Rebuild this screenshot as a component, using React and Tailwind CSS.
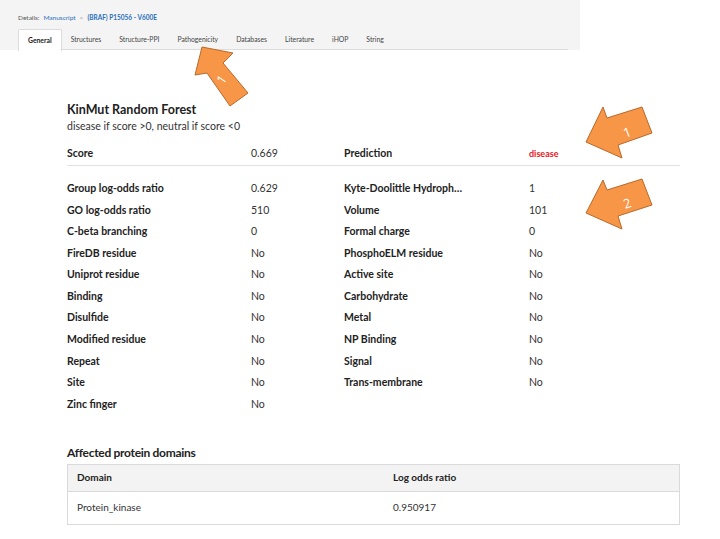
import React from "react";

const rows = [
  ["Group log-odds ratio", "0.629", "Kyte-Doolittle Hydroph…", "1"],
  ["GO log-odds ratio", "510", "Volume", "101"],
  ["C-beta branching", "0", "Formal charge", "0"],
  ["FireDB residue", "No", "PhosphoELM residue", "No"],
  ["Uniprot residue", "No", "Active site", "No"],
  ["Binding", "No", "Carbohydrate", "No"],
  ["Disulfide", "No", "Metal", "No"],
  ["Modified residue", "No", "NP Binding", "No"],
  ["Repeat", "No", "Signal", "No"],
  ["Site", "No", "Trans-membrane", "No"],
  ["Zinc finger", "No", "", ""],
];

const tabs = ["General", "Structures", "Structure-PPI", "Pathogenicity", "Databases", "Literature", "iHOP", "String"];

export default function App() {
  return (
    <div className="relative w-[720px] h-[539px] bg-white overflow-hidden text-[#333]" style={{ fontFamily: "Lato, 'Open Sans', sans-serif" }}>
      <div className="w-[580px] h-[50px] bg-[#f4f4f4] pt-[13px] pl-[18px]">
        <div className="flex items-center gap-[4px] text-[6.5px] leading-[10px]">
          <span className="text-[#555]">Details:</span>
          <span className="text-[#2a6ebb]">Manuscript</span>
          <span className="text-[#999]">&gt;</span>
          <span className="text-[#2a6ebb] font-bold">(BRAF) P15056 - V600E</span>
        </div>
        <div className="mt-[5px] w-[550px] h-[22px] flex border-b border-[#dcdcdc]">
          {tabs.map((t, i) => (
            <div
              key={t}
              className={
                i === 0
                  ? "px-[9px] h-[22px] flex items-center bg-white border border-b-0 border-[#dcdcdc] rounded-t-[2px] text-[6.8px] font-bold text-[#222] relative top-[1px]"
                  : "px-[9px] h-[22px] flex items-center text-[6.8px] text-[#444]"
              }
            >
              {t}
            </div>
          ))}
        </div>
      </div>

      <div className="ml-[67px] w-[613px] mt-[52px]">
        <div className="text-[12.5px] leading-[16px] font-bold text-[#222]">KinMut Random Forest</div>
        <div className="mt-[2px] text-[10.5px] leading-[13px] text-[#333]">disease if score &gt;0, neutral if score &lt;0</div>

        <div className="mt-[10px] grid grid-cols-[184px_93px_185px_1fr] h-[23px] items-center border-b border-[#e2e2e2] text-[10.5px]">
          <span className="font-bold text-[#222]">Score</span>
          <span>0.669</span>
          <span className="font-bold text-[#222]">Prediction</span>
          <span className="text-[#e8141c] font-bold text-[9px]">disease</span>
        </div>

        <div className="mt-[12px]">
          {rows.map((r) => (
            <div key={r[0]} className="grid grid-cols-[184px_93px_185px_1fr] h-[21.6px] items-center text-[10.5px]">
              <span className="font-bold text-[#222] whitespace-nowrap">{r[0]}</span>
              <span>{r[1]}</span>
              <span className="font-bold text-[#222] whitespace-nowrap">{r[2]}</span>
              <span>{r[3]}</span>
            </div>
          ))}
        </div>

        <div className="mt-[29px] text-[12px] leading-[15px] font-bold text-[#222] tracking-[-0.3px]">Affected protein domains</div>
        <div className="mt-[4px] border border-[#dadada]">
          <div className="grid grid-cols-[325px_1fr] h-[27px] items-center bg-[#f3f3f3] border-b border-[#dadada] text-[10px] font-bold text-[#222]">
            <span className="pl-[9px]">Domain</span>
            <span>Log odds ratio</span>
          </div>
          <div className="grid grid-cols-[325px_1fr] h-[32px] items-center text-[10px]">
            <span className="pl-[9px]">Protein_kinase</span>
            <span>0.950917</span>
          </div>
        </div>
      </div>

      <svg className="absolute inset-0 pointer-events-none" width="720" height="539" viewBox="0 0 720 539">
        <g fill="#f79646" stroke="#b9692a" strokeWidth="1" strokeLinejoin="miter">
          <polygon points="202,47 233,53 223,63 248,93 230,106 207,73 195,75" />
          <polygon points="586,142 603,107 607,118 642,107 652,133 618,145 622,158" />
          <polygon points="586,213 603,180 607,190 642,179 652,205 618,216 622,229" />
        </g>
        <g fill="#ffffff" fontFamily="'Open Sans', sans-serif" fontSize="13">
          <text x="222" y="84" transform="rotate(-55 222 80)" textAnchor="middle">1</text>
          <text x="627" y="137" transform="rotate(-20 627 132)" textAnchor="middle">1</text>
          <text x="627" y="208" transform="rotate(-20 627 203)" textAnchor="middle">2</text>
        </g>
      </svg>
    </div>
  );
}
